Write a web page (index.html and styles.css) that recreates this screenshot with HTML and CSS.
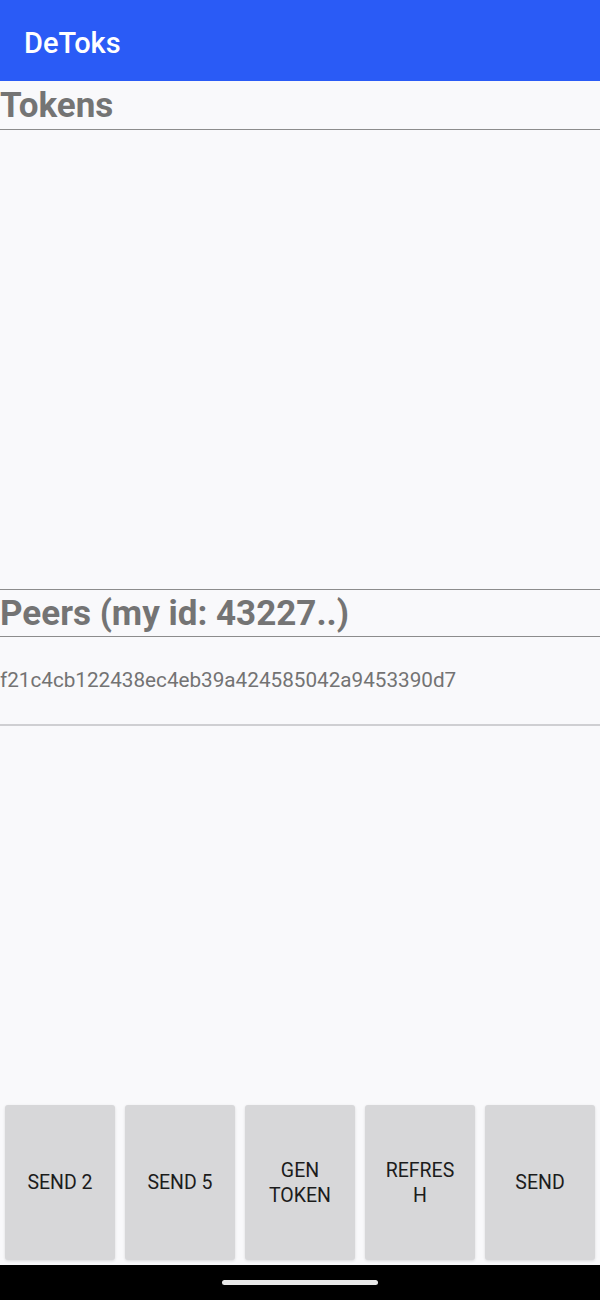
FILE: index.html
```html
<!DOCTYPE html>
<html lang="en">
<head>
<meta charset="utf-8">
<title>DeToks</title>
<link rel="stylesheet" href="styles.css">
</head>
<body>
<div class="screen">
  <header class="appbar"><span class="app-title">DeToks</span></header>
  <h2 class="section-title">Tokens</h2>
  <div class="token-list"></div>
  <h2 class="section-title peers-title">Peers (my id: 43227..)</h2>
  <ul class="peer-list">
    <li class="peer-item">f21c4cb122438ec4eb39a424585042a9453390d7</li>
  </ul>
  <div class="spacer"></div>
  <div class="button-bar">
    <button class="action-btn">SEND 2</button>
    <button class="action-btn">SEND 5</button>
    <button class="action-btn">GEN TOKEN</button>
    <button class="action-btn">REFRESH</button>
    <button class="action-btn">SEND</button>
  </div>
  <div class="nav-bar"><span class="nav-pill"></span></div>
</div>
</body>
</html>
```
FILE: styles.css
```css
* { box-sizing: border-box; }
html, body { margin: 0; padding: 0; }
body {
  font-family: Roboto, "Noto Sans", sans-serif;
  background: #f9f9fb;
}
.screen {
  width: 600px;
  height: 1300px;
  display: flex;
  flex-direction: column;
  background: #f9f9fb;
}
.appbar {
  height: 81px;
  background: #2a5bf6;
  display: flex;
  align-items: center;
  padding: 4px 0 0 24px;
  flex: none;
}
.app-title {
  color: #ffffff;
  font-size: 29px;
  font-weight: 500;
}
.section-title {
  margin: 0;
  height: 49px;
  padding-top: 2px;
  font-size: 35px;
  line-height: 46px;
  font-weight: 700;
  color: #747474;
  border-bottom: 1px solid #8c8c8c;
  white-space: nowrap;
  flex: none;
}
.token-list {
  height: 459px;
  flex: none;
}
.peers-title {
  height: 48px;
  padding-top: 2px;
  line-height: 44px;
  border-top: 1px solid #8c8c8c;
}
.peer-list {
  list-style: none;
  margin: 0;
  padding: 0;
  flex: none;
}
.peer-item {
  height: 89px;
  display: flex;
  align-items: center;
  font-size: 20.7px;
  color: #737373;
  border-bottom: 2px solid #cfcfd2;
  padding-bottom: 2px;
}
.spacer { flex: 1; }
.button-bar {
  display: flex;
  padding: 0 0 5px;
  flex: none;
}
.action-btn {
  width: 110px;
  height: 155px;
  margin: 0 5px;
  padding: 0 16px;
  border: none;
  border-radius: 3px;
  background: #d7d7d9;
  box-shadow: 0 1px 3px rgba(0,0,0,0.12);
  font-family: Roboto, "Noto Sans", sans-serif;
  font-size: 19.5px;
  line-height: 25px;
  font-weight: 400;
  color: #1c1c1c;
  text-align: center;
  overflow-wrap: anywhere;
}
.nav-bar {
  height: 35px;
  background: #000000;
  display: flex;
  justify-content: center;
  padding-top: 15px;
  flex: none;
}
.nav-pill {
  width: 156px;
  height: 5px;
  border-radius: 3px;
  background: #e8e8e8;
}
```
